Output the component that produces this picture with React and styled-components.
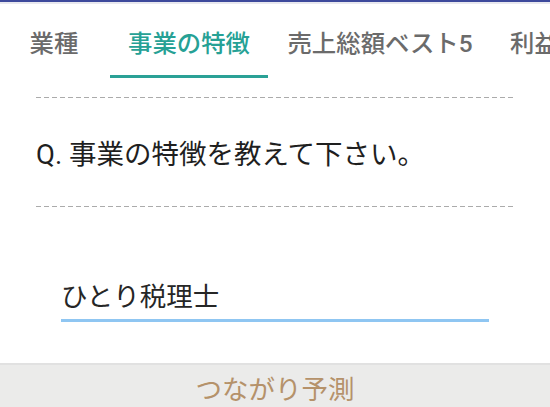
import styled, { createGlobalStyle } from "styled-components";

const GlobalStyle = createGlobalStyle`
  html, body {
    margin: 0;
    padding: 0;
    background: #ffffff;
  }
  body {
    font-family: Roboto, "Noto Sans CJK JP", sans-serif;
  }
`;

// whole screen, stacked top to bottom
const Screen = styled.div`
  width: 550px;
  height: 407px;
  display: flex;
  flex-direction: column;
  overflow: hidden;
  background: #fff;
`;

const TopEdge = styled.div`
  height: 2px;
  background: #3d4a9c;
  border-bottom: 2px solid #e8e8ef;
  flex-shrink: 0;
`;

const TabBar = styled.nav`
  display: flex;
  gap: 2px;
  height: 74px;
  flex-shrink: 0;
  white-space: nowrap;
`;

const Tab = styled.div`
  flex-shrink: 0;
  width: ${(p) => (p.$w ? `${p.$w}px` : "auto")};
  box-sizing: border-box;
  padding: 3px 18px 0;
  display: flex;
  align-items: center;
  justify-content: ${(p) => (p.$w ? "center" : "flex-start")};
  font-size: 24.4px;
  font-weight: 500;
  color: ${(p) => (p.$active ? "#26a195" : "#6b6b6b")};
  border-bottom: 3px solid ${(p) => (p.$active ? "#2aa196" : "transparent")};
`;

const Body = styled.section`
  flex: 1;
  display: flex;
  flex-direction: column;
  padding: 19px 36px 0;
`;

const Dashed = styled.div`
  height: 1px;
  background: repeating-linear-gradient(
    to right,
    #ababab 0 5px,
    transparent 5px 8px
  );
`;

const Question = styled.h2`
  margin: 0;
  height: 108px;
  display: flex;
  align-items: center;
  font-size: 27.5px;
  font-weight: 400;
  color: #1f1f1f;
`;

const Answer = styled.div`
  margin: 67px 26px 0 25px;
  width: 428px;
  font-size: 26.5px;
  color: #262626;
  line-height: 45px;
  border-bottom: 3px solid #8fc6f2;
`;

const Predict = styled.button`
  flex-shrink: 0;
  height: 44px;
  border: none;
  border-top: 2px solid #e1e1e1;
  background: #ebebea;
  font-family: inherit;
  font-size: 26.5px;
  color: #b5926a;
  display: flex;
  align-items: center;
  justify-content: center;
  padding: 3px 0 0;
`;

const tabs = [
  { label: "業種", w: 108 },
  { label: "事業の特徴", w: 158 },
  { label: "売上総額ベスト5", w: 220 },
  { label: "利益" },
];

export default function App() {
  return (
    <>
      <GlobalStyle />
      <Screen>
        <TopEdge />
        <TabBar>
          {tabs.map((t, i) => (
            <Tab key={t.label} $w={t.w} $active={i === 1}>
              {t.label}
            </Tab>
          ))}
        </TabBar>
        <Body>
          <Dashed />
          <Question>Q. 事業の特徴を教えて下さい。</Question>
          <Dashed />
          <Answer>ひとり税理士</Answer>
        </Body>
        <Predict>つながり予測</Predict>
      </Screen>
    </>
  );
}
